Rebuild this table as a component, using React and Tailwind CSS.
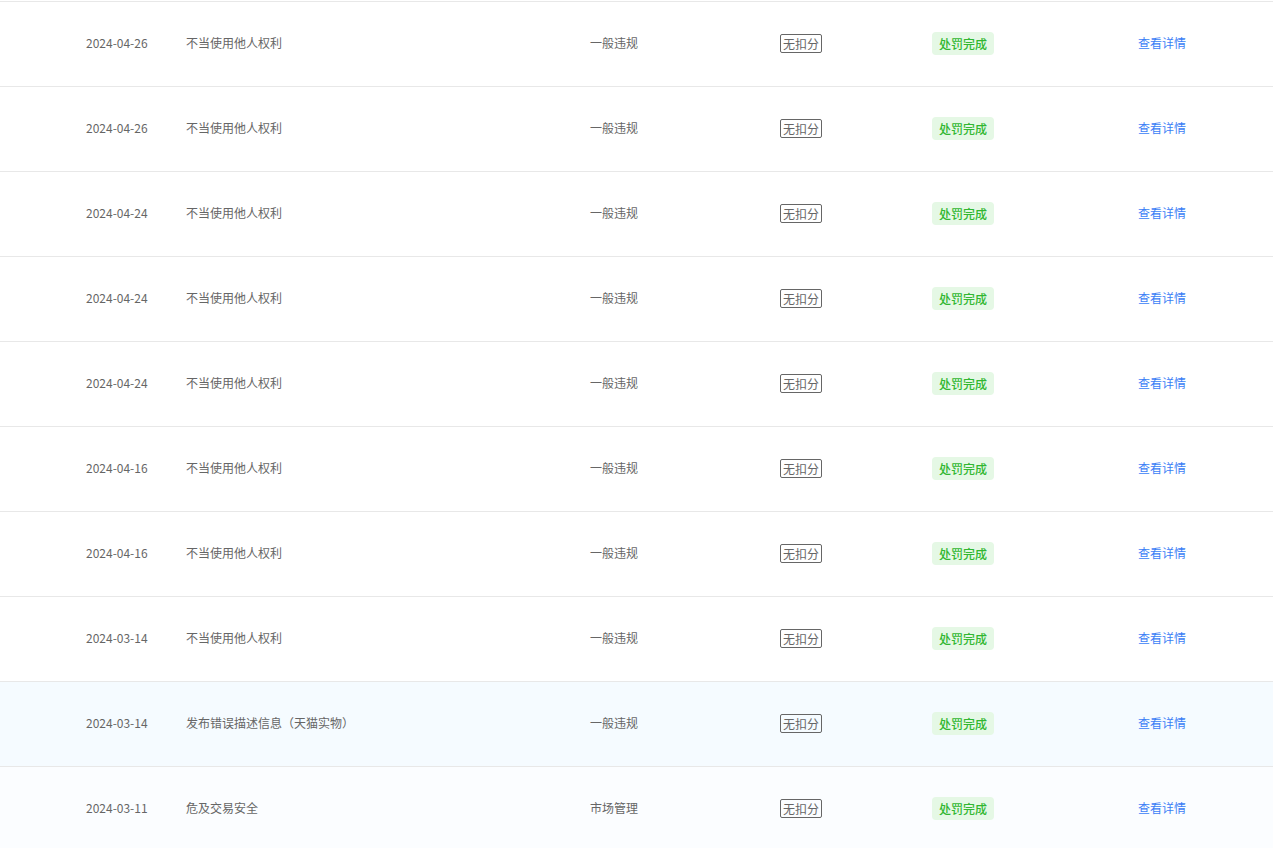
import React from 'react';

const ROWS = [
    ['2024-04-26', '不当使用他人权利', '一般违规'],
    ['2024-04-26', '不当使用他人权利', '一般违规'],
    ['2024-04-24', '不当使用他人权利', '一般违规'],
    ['2024-04-24', '不当使用他人权利', '一般违规'],
    ['2024-04-24', '不当使用他人权利', '一般违规'],
    ['2024-04-16', '不当使用他人权利', '一般违规'],
    ['2024-04-16', '不当使用他人权利', '一般违规'],
    ['2024-03-14', '不当使用他人权利', '一般违规'],
    ['2024-03-14', '发布错误描述信息（天猫实物）', '一般违规'],
    ['2024-03-11', '危及交易安全', '市场管理'],
];

const App = () => (
    <div className="w-[1273px] h-[848px] overflow-hidden bg-white pt-px text-xs text-[#666] font-['Microsoft_YaHei','Noto_Sans_CJK_SC',sans-serif]">
        {ROWS.map(([date, title, type], i) => (
            <div
                key={i}
                className={`h-[85px] border-t border-[#e8e8e8] pl-[86px] pb-[2px] flex items-center ${i === 8 ? 'bg-[#f5fbff]' : i === 9 ? 'bg-[#fbfdff]' : 'bg-white'}`}
            >
                <div className="w-[100px]">{date}</div>
                <div className="w-[404px]">{title}</div>
                <div className="w-[190px]">{type}</div>
                <div className="w-[152px]">
                    <span className="inline-block border border-[#666] rounded-[2px] px-[2px] leading-[17px]">无扣分</span>
                </div>
                <div className="w-[206px]">
                    <span className="inline-block bg-[#e5f8e5] text-[#31b731] rounded px-[7px] leading-[23px] font-medium">处罚完成</span>
                </div>
                <div className="text-[#3b7ef6]">查看详情</div>
            </div>
        ))}
    </div>
);

export default App;
